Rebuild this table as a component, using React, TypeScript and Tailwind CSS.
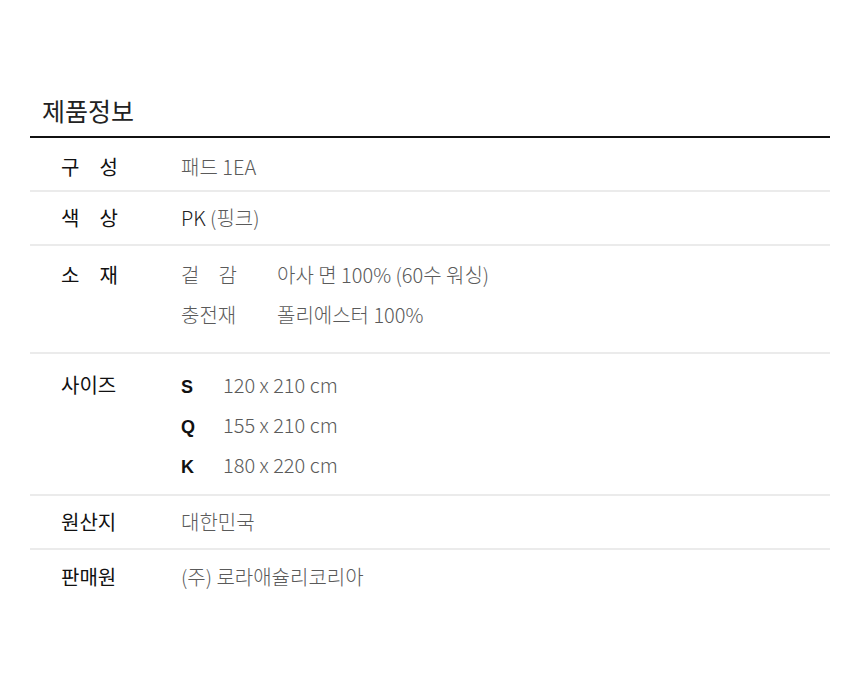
const font = { fontFamily: '"Noto Sans CJK KR", "Noto Sans", sans-serif' };

function Label({ text }: { text: string }) {
  if (text.length === 3) {
    return <div className="shrink-0 text-[20px] font-normal text-[#111]">{text}</div>;
  }
  const chars = text.split("");
  return (
    <div className="flex w-[57px] shrink-0 justify-between text-[20px] font-normal text-[#111]">
      {chars.map((c, i) => (
        <span key={i}>{c}</span>
      ))}
    </div>
  );
}

function Row({
  label,
  children,
  className = "",
  last = false,
}: {
  label: string;
  children: React.ReactNode;
  className?: string;
  last?: boolean;
}) {
  return (
    <div className={`flex ${last ? "" : "border-b-2 border-[#ebebeb]"} ${className}`}>
      <div className="w-[151px] shrink-0 pl-[31px]">
        <Label text={label} />
      </div>
      <div className="flex-1 text-[20px] font-light text-[#5a5a5a]">{children}</div>
    </div>
  );
}

export default function App() {
  const sizes = [
    { k: "S", v: "120 x 210 cm" },
    { k: "Q", v: "155 x 210 cm" },
    { k: "K", v: "180 x 220 cm" },
  ];

  return (
    <div className="min-h-[687px] bg-white px-[30px] pt-[92px]" style={font}>
      <h2 className="pl-[12px] pb-[8px] text-[25px] font-normal leading-[36px] text-[#222]">제품정보</h2>
      <div className="border-t-2 border-[#111]">
        <Row label="구성" className="pt-[17px] pb-[11px] leading-[24px]">
          패드 1EA
        </Row>
        <Row label="색상" className="pt-[14px] pb-[14px] leading-[24px]">
          <span className="text-[#222]">PK</span> (핑크)
        </Row>
        <Row label="소재" className="pt-[9px] pb-[17px] leading-[40px]">
          <div className="flex">
            <div className="flex w-[96px] shrink-0">
              <span className="flex w-[56px] justify-between">
                <span>겉</span>
                <span>감</span>
              </span>
            </div>
            <div>아사 면 100% (60수 워싱)</div>
          </div>
          <div className="flex">
            <div className="w-[96px] shrink-0">충전재</div>
            <div>폴리에스터 100%</div>
          </div>
        </Row>
        <Row label="사이즈" className="pt-[11px] pb-[9px] leading-[40px]">
          {sizes.map((s) => (
            <div key={s.k} className="flex h-[40px] items-baseline overflow-hidden">
              <div
                className="w-[42px] shrink-0 text-[18px] font-bold text-[#111]"
                style={{ fontFamily: '"Liberation Sans", Arial, sans-serif' }}
              >
                {s.k}
              </div>
              <div>{s.v}</div>
            </div>
          ))}
        </Row>
        <Row label="원산지" className="pt-[14px] pb-[14px] leading-[24px]">
          대한민국
        </Row>
        <Row label="판매원" className="pt-[15px] pb-[13px] leading-[24px]" last>
          (주) 로라애슐리코리아
        </Row>
      </div>
    </div>
  );
}
